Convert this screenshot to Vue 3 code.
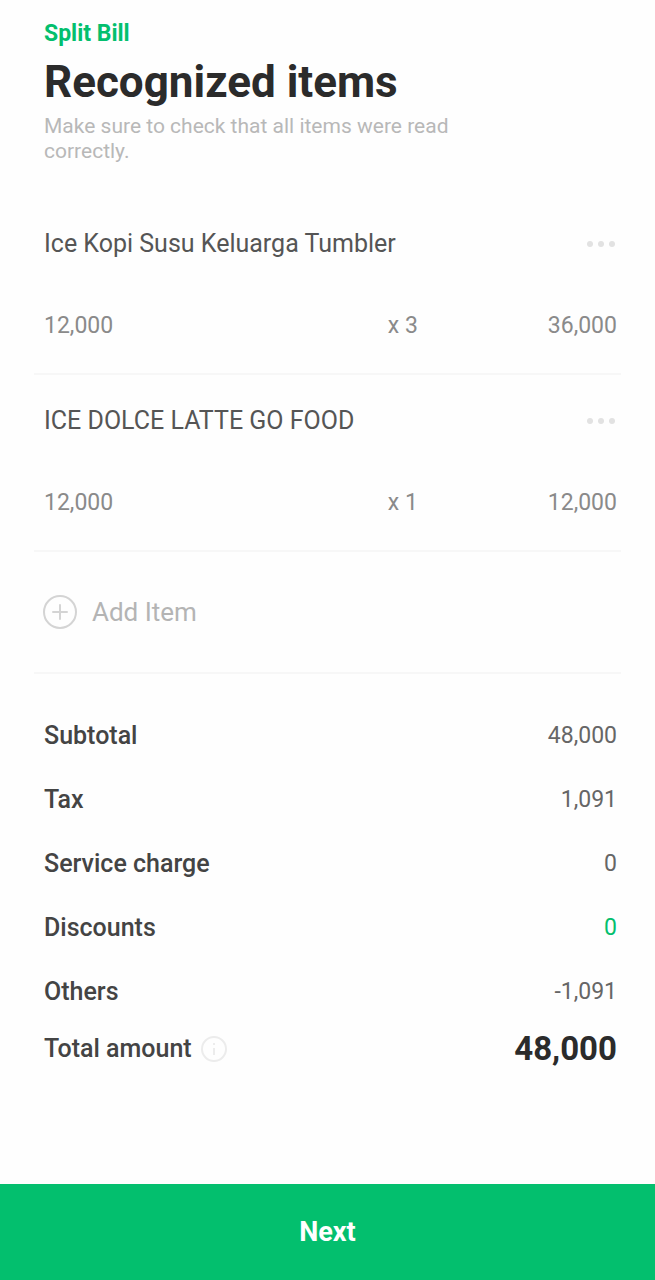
<script setup>
const items = [
  { name: 'Ice Kopi Susu Keluarga Tumbler', price: '12,000', qty: 'x 3', total: '36,000' },
  { name: 'ICE DOLCE LATTE GO FOOD', price: '12,000', qty: 'x 1', total: '12,000' },
]
const summary = [
  { label: 'Subtotal', value: '48,000' },
  { label: 'Tax', value: '1,091' },
  { label: 'Service charge', value: '0' },
  { label: 'Discounts', value: '0', green: true },
  { label: 'Others', value: '-1,091' },
]
</script>

<template>
  <div class="page">
    <main class="content">
      <header class="header">
        <p class="eyebrow">Split Bill</p>
        <h1 class="title">Recognized items</h1>
        <p class="subtitle">Make sure to check that all items were read correctly.</p>
      </header>

      <section v-for="item in items" :key="item.name" class="item">
        <div class="item-head">
          <h2 class="item-name">{{ item.name }}</h2>
          <button class="icon-button" type="button" :aria-label="'Options for ' + item.name">
            <svg width="32" height="8" viewBox="0 0 32 8" fill="#e2e2e2">
              <circle cx="5" cy="4" r="3" />
              <circle cx="16" cy="4" r="3" />
              <circle cx="27" cy="4" r="3" />
            </svg>
          </button>
        </div>
        <div class="item-row">
          <span>{{ item.price }}</span>
          <span>{{ item.qty }}</span>
          <span class="right">{{ item.total }}</span>
        </div>
      </section>

      <div class="add">
        <button class="add-button" type="button">
          <svg width="36" height="36" viewBox="0 0 36 36" fill="none" stroke="#d4d4d4" stroke-width="2">
            <circle cx="18" cy="18" r="16" />
            <path d="M18 11v14M11 18h14" stroke-linecap="round" />
          </svg>
          <span>Add Item</span>
        </button>
      </div>

      <dl class="summary">
        <div v-for="row in summary" :key="row.label" class="sum-row">
          <dt>{{ row.label }}</dt>
          <dd :class="{ green: row.green }">{{ row.value }}</dd>
        </div>
        <div class="sum-row total">
          <dt>
            Total amount
            <button class="icon-button" type="button" aria-label="About the total amount">
              <svg width="28" height="28" viewBox="0 0 28 28" fill="none" stroke="#ececec" stroke-width="2">
                <circle cx="14" cy="14" r="12" />
                <path d="M14 13v7M14 8v2" />
              </svg>
            </button>
          </dt>
          <dd>48,000</dd>
        </div>
      </dl>
    </main>

    <button class="next" type="button">Next</button>
  </div>
</template>

<style>
body {
  background: #fefefe;
}
</style>

<style scoped>
.page {
  display: flex;
  flex-direction: column;
  min-height: 100vh;
  font-family: Roboto, "Liberation Sans", sans-serif;
  font-size: 23px;
  line-height: 24px;
  color: #444;
}
.content {
  flex: 1;
  padding: 22px 34px 32px;
}
h1, h2, p, dl, dd {
  margin: 0;
}
button {
  padding: 0;
  border: 0;
  background: none;
  font: inherit;
  cursor: pointer;
}
svg {
  display: block;
}
.header {
  padding: 0 10px 34px;
}
.eyebrow {
  font-size: 23px;
  font-weight: 700;
  color: #03bf6e;
}
.title {
  margin: 12px 0 8px;
  font-size: 44px;
  line-height: 48px;
  font-weight: 700;
  color: #2b2b2b;
}
.subtitle {
  max-width: 440px;
  font-size: 21px;
  line-height: 25px;
  color: #b8b8b8;
}
.item {
  padding: 34px 4px 35px 10px;
  border-bottom: 2px solid #f7f7f7;
}
.item-head {
  display: flex;
  align-items: center;
  justify-content: space-between;
  margin-bottom: 58px;
}
.item-name {
  font-size: 25px;
  line-height: 24px;
  font-weight: 400;
  color: #555;
}
.item-row {
  display: grid;
  grid-template-columns: 3fr 1fr 1fr;
  color: #8a8a8a;
}
.right {
  text-align: right;
}
.add {
  padding: 42px 8px;
  border-bottom: 2px solid #f7f7f7;
}
.add-button {
  display: flex;
  align-items: center;
  gap: 14px;
  font-size: 26px;
  color: #b4b4b4;
}
.summary {
  padding: 30px 4px 0 10px;
}
.sum-row {
  display: flex;
  align-items: center;
  justify-content: space-between;
  height: 64px;
}
.sum-row dt {
  display: flex;
  align-items: center;
  gap: 8px;
  font-size: 25px;
  font-weight: 500;
}
.sum-row dd {
  color: #666;
}
.sum-row dd.green {
  color: #03bf6e;
}
.sum-row.total {
  height: 50px;
}
.sum-row.total dd {
  font-size: 33px;
  font-weight: 700;
  color: #2b2b2b;
}
.next {
  height: 96px;
  background: #03bf6e;
  color: #fff;
  font-size: 27px;
  font-weight: 700;
}
</style>
